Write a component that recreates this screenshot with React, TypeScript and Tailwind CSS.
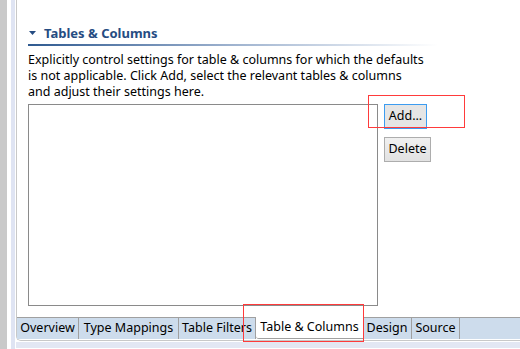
export default function App() {
  const tabs: { label: string; w: string; selected?: boolean }[] = [
    { label: "Overview", w: "w-[62px]" },
    { label: "Type Mappings", w: "w-[100px]" },
    { label: "Table Filters", w: "w-[77px]" },
    { label: "Table & Columns", w: "w-[107px]", selected: true },
    { label: "Design", w: "w-[49px]" },
    { label: "Source", w: "w-[48px]" },
  ];
  return (
    <div
      className="relative w-[520px] h-[349px] flex bg-white overflow-hidden text-black"
      style={{ fontFamily: '"Noto Sans", "Open Sans", sans-serif' }}
    >
      <div className="w-[7px] shrink-0 bg-[#c9c9c9]" />
      <div className="w-[4px] shrink-0 bg-white" />
      <div className="w-[4px] shrink-0 bg-[#dfe4f3]" />
      <div className="flex-1 flex flex-col pl-[1px]">
        <div className="h-[341px] flex flex-col border-l border-b border-[#c8c8c8] rounded-bl-[5px] bg-white">
          <div className="flex-1 flex flex-col pl-[11px] pt-[24px]">
            <div className="flex items-center h-[18px]">
              <svg width="7" height="4" viewBox="0 0 7 4" className="ml-[1px]">
                <polygon points="0,0 7,0 3.5,4" fill="#254c82" />
              </svg>
              <span className="ml-[8px] text-[13px] font-bold text-[#254c82] leading-[18px]">
                Tables &amp; Columns
              </span>
            </div>
            <div className="mt-[2px] h-[2px] w-[410px] bg-gradient-to-r from-[#2f5a90] via-[#9fb3cf] to-[#ffffff]" />
            <div className="mt-[6px] text-[12.5px] leading-[16px]">
              Explicitly control settings for table &amp; columns for which the defaults
              <br />
              is not applicable. Click Add, select the relevant tables &amp; columns
              <br />
              and adjust their settings here.
            </div>
            <div className="mt-[4px] flex">
              <div className="w-[350px] h-[202px] border border-[#8a8a8a] bg-white" />
              <div className="ml-[6px] flex flex-col gap-[8px]">
                <button className="w-[43px] h-[25px] border border-[#3c9cf0] bg-[#e5e5e5] text-[12.5px] leading-none">
                  Add...
                </button>
                <button className="w-[47px] h-[25px] border border-[#adadad] bg-gradient-to-b from-[#f0f0f0] to-[#e2e2e2] text-[12.5px] leading-none">
                  Delete
                </button>
              </div>
            </div>
          </div>
          <div className="h-[22px] flex items-stretch text-[12.5px]">
            {tabs.map((t) =>
              t.selected ? (
                <div
                  key={t.label}
                  className={`${t.w} shrink-0 flex items-center justify-center bg-white border-b border-[#a0a0a0] rounded-bl-[3px]`}
                >
                  {t.label}
                </div>
              ) : (
                <div
                  key={t.label}
                  className={`${t.w} shrink-0 flex items-center justify-center bg-[#cddcec] border-t border-r border-[#a0a0a0]`}
                >
                  {t.label}
                </div>
              )
            )}
            <div className="flex-1 bg-[#cddcec] border-t border-[#a0a0a0]" />
          </div>
          <div className="h-[1px]" />
        </div>
        <div className="mt-[1px] h-[6px] bg-[#e3e7f3]" />
      </div>
      <div className="absolute left-[368px] top-[95px] w-[97px] h-[33px] border border-[#ff3b3b]" />
      <div className="absolute left-[243px] top-[304px] w-[121px] h-[38px] border border-[#ff3b3b]" />
    </div>
  );
}
